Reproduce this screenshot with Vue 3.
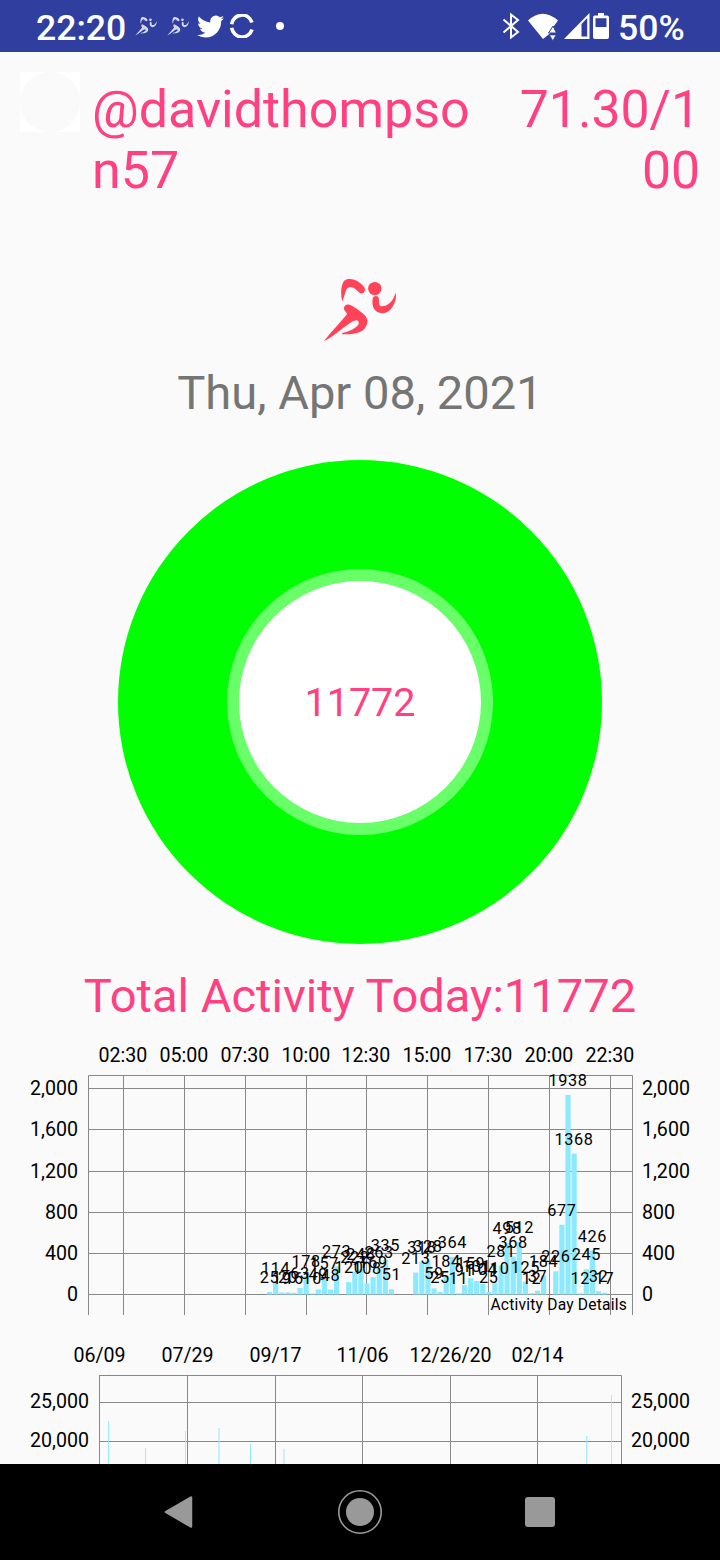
<script setup>
const hourTicks = ['02:30', '05:00', '07:30', '10:00', '12:30', '15:00', '17:30', '20:00', '22:30']
const hourLines = [123, 184, 245, 306, 366, 427, 488, 549, 610]
const dayLevels = [
  { label: '2,000', y: 13 },
  { label: '1,600', y: 54 },
  { label: '1,200', y: 96 },
  { label: '800', y: 137 },
  { label: '400', y: 178 },
  { label: '0', y: 219 }
]

// Quarter-hour step counts, beginning at 08:30; zero means no activity.
const steps = [
  25, 114, 19, 20, 16, 63, 178, 10, 49, 157, 48, 273, 0, 120, 222, 248, 108, 169, 263, 335, 51,
  0, 0, 0, 213, 318, 328, 59, 25, 184, 364, 11, 91, 159, 131, 104, 25, 110, 281, 498, 368, 512,
  125, 12, 37, 184, 0, 226, 677, 1938, 1368, 12, 245, 426, 32, 17
]
const bars = steps
  .map((value, i) => ({ value, x: 269.6 + i * 6.09, h: value * 0.103 }))
  .filter((b) => b.value > 0)

const dateTicks = [
  { label: '06/09', x: 99 },
  { label: '07/29', x: 187 },
  { label: '09/17', x: 275 },
  { label: '11/06', x: 362 },
  { label: '12/26/20', x: 450 },
  { label: '02/14', x: 537 }
]
const historyBars = [
  { x: 108, y: 46, w: 1, o: 0.9 },
  { x: 145, y: 73, w: 1, o: 0.9 },
  { x: 185, y: 56, w: 1, o: 0.8 },
  { x: 218, y: 53, w: 2, o: 0.5 },
  { x: 250, y: 69, w: 1, o: 1 },
  { x: 283, y: 74, w: 2, o: 0.45 },
  { x: 586, y: 61, w: 1.4, o: 0.75 },
  { x: 611, y: 20, w: 1, o: 0.8 }
]
const runner = [
  'M19.500 22.600C17.500 17 17.500 5 21.800 1.300C23 .2 25 0 26.800 0C30 .2 32.500 1 35 2.600C38.500 4.800 41 7.500 41.800 9.600C42.500 13 40.500 15 37.500 14.300C35.500 13.500 34.500 12 32.800 10.600C31 9 29.500 7.900 27.500 8C24.500 8.200 23.500 10 22.800 12C21.500 15.500 20.800 19 19.500 22.600Z',
  'M.8 62.300C8 53 17 44 24 35.300C24 33 21 32.500 21 29.600C21 27 23 25.400 25 25.600C27.500 25.800 29.500 27.300 31.800 28.600C35.500 31 39 33.500 41.800 36.300C44 39 45 41.500 44.500 43.600C43.500 47.500 41.500 50.500 38.500 52.300C33 55 26 55.500 19.500 55.300L18.800 54C24 53 28 51.500 31.800 49C34 47.500 35.500 46 35.800 44C35.800 42.300 35 41.300 33.500 41.300C32 41.500 30.500 42 28.500 43C24 46 19.500 49.500 15 53C10.500 56.500 6 60 .8 62.300Z',
  'M49.500 21C49.500 18.500 51 17 52.800 17C55 17 56.200 18.500 56 21C56 24 56 27.300 58.500 27.300C62 27.300 64.500 26 66.800 24C70 21 71.500 17.500 72.500 14C73.300 15.500 73 18 72.800 19.600C72 24 70.300 27.500 67.500 30.600C65 33 62 34.500 59 34.300C55.500 34.200 52.800 32.500 50.800 29.600C49.500 27 49.300 24 49.500 21Z'
]
</script>

<template>
  <main class="screen">
    <header class="status">
      <span class="clock">22:20</span>
      <svg v-for="n in 2" :key="n" class="mini" viewBox="0 0 74 64">
        <path v-for="d in runner" :key="d" :d="d" />
        <circle cx="51.800" cy="9.600" r="4.500" />
      </svg>
      <svg class="bird" viewBox="0 0 24 24">
        <path d="M24 4.560c-.9.400-1.800.700-2.800.800 1-.6 1.800-1.600 2.200-2.700-1 .6-2 1-3.100 1.200a4.920 4.920 0 0 0-8.400 4.500C7.700 8.100 4.100 6.100 1.700 3.100a4.900 4.900 0 0 0 1.500 6.600c-.8 0-1.600-.2-2.200-.6 0 2.300 1.600 4.400 3.900 4.900-.7.200-1.500.2-2.200.1.600 2 2.400 3.400 4.600 3.400A9.900 9.900 0 0 1 0 19.500 13.900 13.900 0 0 0 7.500 21.700c9.100 0 14.300-7.700 14-14.600.9-.7 1.800-1.500 2.500-2.540z" />
      </svg>
      <svg class="ring" viewBox="0 0 24 24">
        <path d="M1.700 10.300A10.400 10.400 0 0 1 22 8.500M1.700 13.800A10.400 10.400 0 0 0 22 15.500" fill="none" stroke="#fff" stroke-width="3.600" />
      </svg>
      <i class="dot"></i>
      <span class="gap"></span>
      <svg class="bt" viewBox="0 0 18 28">
        <path d="M1.500 7.500L16 20L9 25.500V2.500L16 8L1.500 20.500" fill="none" stroke="#fff" stroke-width="2" />
      </svg>
      <svg class="wifi" viewBox="0 0 32 28">
        <path d="M1 7.500Q15.500-6 31 7.500L27 13L23.500 18V20L16 26Z" />
        <path d="M21.500 20L26 13L29.500 20Z" stroke="#303f9f" stroke-width="1" />
        <path d="M22.500 22H29L25.800 27.500Z" stroke="#303f9f" stroke-width=".6" />
      </svg>
      <svg class="signal" viewBox="0 0 26 26">
        <path fill-rule="evenodd" d="M0 26L25.500 0V26ZM17.500 11V23.500H23.200V5Z" />
      </svg>
      <svg class="battery" viewBox="0 0 16 26">
        <path fill-rule="evenodd" d="M5 0H11V2.500H14Q16 2.500 16 4.500V24Q16 26 14 26H2Q0 26 0 24V4.500Q0 2.500 2 2.500H5ZM2.500 5.300V14H13.500V5.300Z" />
      </svg>
      <span class="pct">50%</span>
    </header>

    <section class="profile">
      <div class="avatar"><i></i></div>
      <div class="name">@davidthompson57</div>
      <div class="score">71.30/100</div>
    </section>

    <svg class="logo" viewBox="0 0 74 64">
      <path v-for="d in runner" :key="d" :d="d" />
      <circle cx="51.800" cy="9.600" r="6.700" />
    </svg>
    <div class="date">Thu, Apr 08, 2021</div>
    <div class="pie"><div class="halo"><div class="hole">11772</div></div></div>
    <div class="total">Total Activity Today:11772</div>

    <svg class="day" width="720" height="285" viewBox="0 0 720 285">
      <g class="axis" text-anchor="middle">
        <text v-for="(t, i) in hourTicks" :key="t" :x="hourLines[i]" y="27">{{ t }}</text>
      </g>
      <g transform="translate(0 40)">
        <g class="grid">
          <path d="M88.500 240V0.500H632.500V240" />
          <path v-for="x in hourLines" :key="x" :d="`M${x + 0.5} 0V240`" />
          <path v-for="l in dayLevels" :key="l.y" :d="`M88 ${l.y + 0.5}H633`" />
        </g>
        <g class="axis">
          <template v-for="l in dayLevels" :key="l.label">
            <text x="78" :y="l.y + 7" text-anchor="end">{{ l.label }}</text>
            <text x="642" :y="l.y + 7">{{ l.label }}</text>
          </template>
        </g>
        <rect v-for="b in bars" :key="b.x" :x="b.x - 2.6" :y="219.500 - b.h" width="5.200" :height="b.h" fill="#8ceaff" />
        <g class="values" text-anchor="middle">
          <text v-for="b in bars" :key="b.x" :x="b.x" :y="210.500 - b.h">{{ b.value }}</text>
        </g>
        <text class="caption" x="627" y="235" text-anchor="end">Activity Day Details</text>
      </g>
    </svg>

    <svg class="history" width="720" height="129" viewBox="0 0 720 129">
      <g class="axis" text-anchor="middle">
        <text v-for="t in dateTicks" :key="t.label" :x="t.x + 0.5" y="27">{{ t.label }}</text>
      </g>
      <g transform="translate(0 40)">
        <g class="grid">
          <path d="M99.500 90V0.500H621.500V90M99 27.500H622M99 66.500H622" />
          <path v-for="t in dateTicks" :key="t.x" :d="`M${t.x + 0.5} 0V90`" />
        </g>
        <g class="axis">
          <text x="89" y="33" text-anchor="end">25,000</text>
          <text x="89" y="72" text-anchor="end">20,000</text>
          <text x="631" y="33">25,000</text>
          <text x="631" y="72">20,000</text>
        </g>
        <rect v-for="b in historyBars" :key="b.x" :x="b.x" :y="b.y" :width="b.w" height="90" :opacity="b.o" fill="#8ceaff" />
      </g>
    </svg>

    <nav class="nav">
      <svg class="back" viewBox="0 0 30 34"><path d="M2 17L27 2.500V31.500Z" /></svg>
      <svg class="home" viewBox="0 0 44 44">
        <circle cx="22" cy="22" r="21.200" fill="none" stroke="#999" stroke-width="1.600" />
        <circle cx="22" cy="22" r="14" />
      </svg>
      <i class="recent"></i>
    </nav>
  </main>
</template>

<style scoped>
.screen {
  width: 720px;
  height: 1560px;
  display: flex;
  flex-direction: column;
  align-items: center;
  background: #fafafa;
  font-family: Roboto, "Liberation Sans", sans-serif;
  overflow: hidden;
}
.screen > * { flex-shrink: 0; }
.status {
  width: 720px;
  height: 52px;
  box-sizing: border-box;
  padding: 0 36px;
  display: flex;
  align-items: center;
  background: #303f9f;
  color: #fff;
  fill: #fff;
}
.clock, .pct { font-size: 35.600px; font-weight: 500; line-height: 52px; padding-top: 3px; }
.clock { width: 90px; margin-right: 9px; }
.mini { width: 22px; height: 19px; margin-right: 10px; opacity: .8; }
.mini + .bird { margin-left: -2px; }
.bird { width: 27px; height: 27px; margin-right: 6px; }
.ring { width: 24px; height: 24px; margin-right: 22px; }
.dot { width: 8px; height: 8px; border-radius: 50%; background: #fff; }
.gap { flex: 1; }
.bt { width: 18px; height: 28px; margin-right: 7px; }
.wifi { width: 32px; height: 28px; margin: 1px 5px 0 0; }
.signal { width: 26px; height: 26px; margin-right: 3px; }
.battery { width: 16px; height: 26px; margin-right: 9px; }
.pct { width: 66px; white-space: nowrap; }
.profile {
  width: 720px;
  height: 227px;
  box-sizing: border-box;
  padding: 20px 20px 0;
  display: flex;
  align-items: flex-start;
  color: #ff4081;
  font-size: 52px;
  line-height: 61px;
  overflow-wrap: anywhere;
}
.avatar { width: 60px; height: 60px; background: #fff; margin-right: 12px; }
.avatar i { display: block; width: 60px; height: 60px; border-radius: 50%; background: #fafafa; }
.name { width: 390px; margin-top: 7px; }
.score { width: 190px; margin: 7px 0 0 auto; text-align: right; word-break: break-all; font-size: 51.700px; }
.logo { width: 74px; height: 64px; fill: #ff4459; }
.date { margin-top: 22px; height: 56px; line-height: 56px; font-size: 47.100px; color: #757575; white-space: nowrap; }
.pie {
  margin-top: 39px;
  width: 484px;
  height: 484px;
  border-radius: 50%;
  background: #0f0;
  display: grid;
  place-items: center;
}
.halo { width: 266px; height: 266px; border-radius: 50%; background: #69ff69; display: grid; place-items: center; }
.hole {
  width: 242px;
  height: 242px;
  border-radius: 50%;
  background: #fff;
  color: #ff4081;
  font-size: 39.500px;
  line-height: 244px;
  text-align: center;
}
.total { margin-top: 24px; height: 56px; line-height: 56px; font-size: 47.100px; color: #ff4081; white-space: nowrap; }
.day { margin-top: 11px; }
.history { margin-top: 15px; }
.grid { stroke: #888; stroke-width: 1; fill: none; }
.axis { font-size: 19.600px; fill: #000; }
.values { font-size: 16.300px; letter-spacing: .6px; fill: #000; }
.caption { font-size: 15.600px; letter-spacing: .2px; }
.nav {
  width: 720px;
  height: 96px;
  background: #000;
  fill: #999;
  display: grid;
  grid-template-columns: 180px 180px 180px;
  justify-content: center;
  align-items: center;
  justify-items: center;
}
.nav .back { width: 30px; height: 34px; margin-right: 3px; }
.nav path { stroke: #999; stroke-width: 2.500px; stroke-linejoin: round; }
.nav .home { width: 44px; height: 44px; }
.recent { width: 30px; height: 30px; border-radius: 3px; background: #999; }
</style>
<style>
html, body { margin: 0; background: #fafafa; }
</style>
